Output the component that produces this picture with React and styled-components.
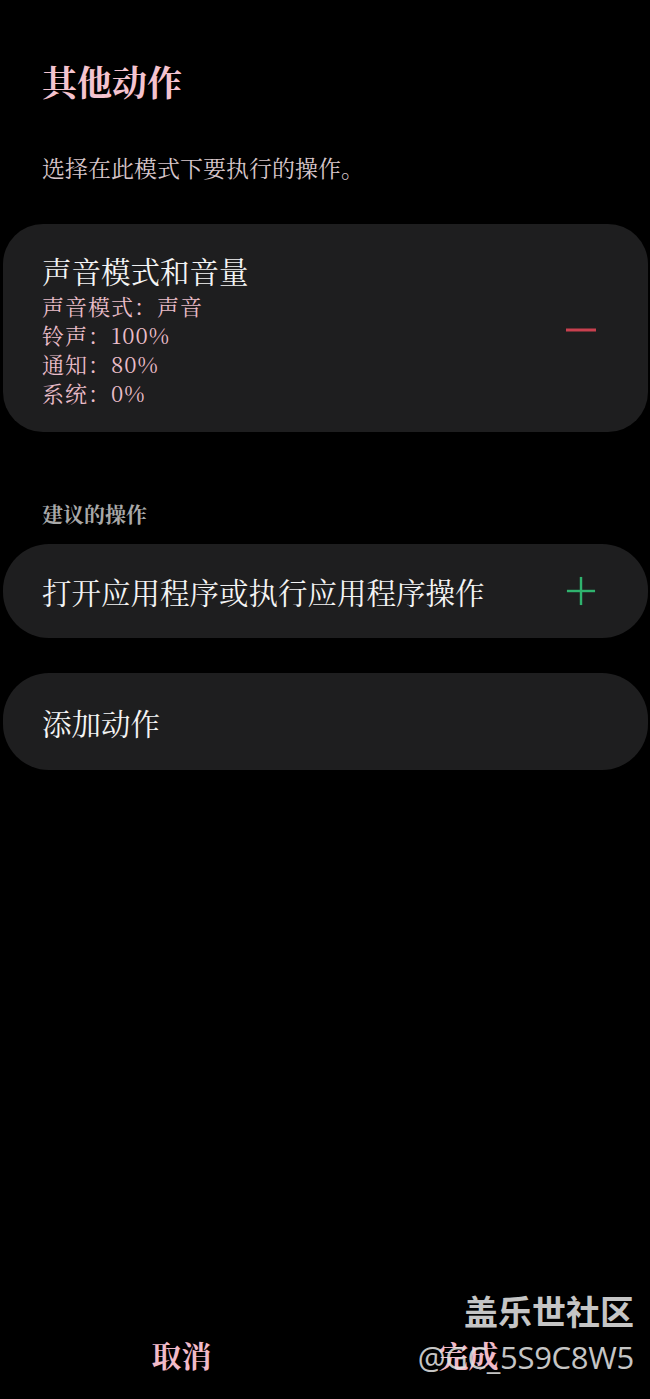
import React from "react";
import styled, { createGlobalStyle } from "styled-components";

const FONT = `"AR PL UKai CN", "KaiTi", "STKaiti", "Noto Serif CJK SC", "Noto Sans CJK SC", serif`;

const Global = createGlobalStyle`
  html, body { margin: 0; padding: 0; background: #000; }
  body { font-family: ${FONT}; }
  * { box-sizing: border-box; }
`;

const Screen = styled.div`
  position: relative;
  width: 650px;
  height: 1399px;
  background: #000;
  display: flex;
  flex-direction: column;
  overflow: hidden;
`;

const Main = styled.div`
  flex: 1;
  display: flex;
  flex-direction: column;
  padding: 61px 2px 0 3px;
`;

const Title = styled.h1`
  margin: 0 0 0 39px;
  font-size: 35px;
  line-height: 40px;
  font-weight: 700;
  color: #f4c3cf;
`;

const Subtitle = styled.p`
  margin: 53px 0 0 39px;
  font-size: 23px;
  line-height: 28px;
  color: #d8c7cb;
`;

const Card = styled.div`
  background: #1e1e1f;
  border-radius: ${(p) => p.$radius || 46}px;
  display: flex;
  align-items: center;
  justify-content: space-between;
  padding: ${(p) => p.$pad || "0 52px 0 39px"};
  min-height: ${(p) => p.$h || 94}px;
  margin-top: ${(p) => p.$mt || 0}px;
`;

const CardBody = styled.div`
  display: flex;
  flex-direction: column;
`;

const CardTitle = styled.div`
  font-size: 29.5px;
  line-height: 36px;
  color: #f4f4f4;
`;

const Detail = styled.div`
  font-size: 22px;
  line-height: 29px;
  letter-spacing: 1px;
  color: #eabdc9;
  margin-top: ${(p) => (p.$first ? 3 : 0)}px;
`;

const SectionLabel = styled.div`
  margin: 68px 0 0 39px;
  font-size: 21px;
  line-height: 26px;
  font-weight: 700;
  color: #a9a9a9;
`;

const RowText = styled.div`
  font-size: 29.5px;
  line-height: 36px;
  color: #f4f4f4;
`;

const IconBox = styled.div`
  width: 30px;
  height: 32px;
  display: flex;
  align-items: center;
  justify-content: center;
`;

const Footer = styled.div`
  display: grid;
  grid-template-columns: 1fr 1fr;
  padding: 0 38px 27px;
`;

const FooterButton = styled.div`
  text-align: center;
  font-size: 30px;
  line-height: 36px;
  font-weight: 700;
  color: #f1bac9;
`;

const Watermark = styled.div`
  position: absolute;
  right: 16px;
  bottom: 24px;
  display: flex;
  flex-direction: column;
  align-items: flex-end;
  color: rgba(226, 226, 226, 0.88);
  font-family: "Noto Sans CJK SC", "Open Sans", sans-serif;
  pointer-events: none;
`;

const WmTitle = styled.div`
  font-size: 34px;
  line-height: 42px;
  font-weight: 700;
  margin-bottom: 7px;
`;

const WmId = styled.div`
  font-family: "Open Sans", "Noto Sans", sans-serif;
  font-size: 31px;
  line-height: 36px;
  letter-spacing: -0.3px;
`;

const Minus = () => (
  <svg width="30" height="6" viewBox="0 0 30 6">
    <line x1="0" y1="3" x2="30" y2="3" stroke="#c9404f" strokeWidth="3" />
  </svg>
);

const Plus = () => (
  <svg width="32" height="32" viewBox="0 0 32 32">
    <line x1="1" y1="16" x2="31" y2="16" stroke="#2fb36e" strokeWidth="2.6" />
    <line x1="16" y1="1" x2="16" y2="31" stroke="#2fb36e" strokeWidth="2.6" />
  </svg>
);

export default function App() {
  return (
    <>
      <Global />
      <Screen>
        <Main>
          <Title>其他动作</Title>
          <Subtitle>选择在此模式下要执行的操作。</Subtitle>
          <Card $mt={42} $radius={40} $pad="28px 52px 25px 39px" $h={207}>
            <CardBody>
              <CardTitle>声音模式和音量</CardTitle>
              <Detail $first>声音模式：声音</Detail>
              <Detail>铃声：100%</Detail>
              <Detail>通知：80%</Detail>
              <Detail>系统：0%</Detail>
            </CardBody>
            <IconBox>
              <Minus />
            </IconBox>
          </Card>
          <SectionLabel>建议的操作</SectionLabel>
          <Card $mt={18} $h={94}>
            <RowText>打开应用程序或执行应用程序操作</RowText>
            <IconBox>
              <Plus />
            </IconBox>
          </Card>
          <Card $mt={35} $h={97}>
            <RowText>添加动作</RowText>
          </Card>
        </Main>
        <Footer>
          <FooterButton>取消</FooterButton>
          <FooterButton>完成</FooterButton>
        </Footer>
        <Watermark>
          <WmTitle>盖乐世社区</WmTitle>
          <WmId>@GC_5S9C8W5</WmId>
        </Watermark>
      </Screen>
    </>
  );
}
